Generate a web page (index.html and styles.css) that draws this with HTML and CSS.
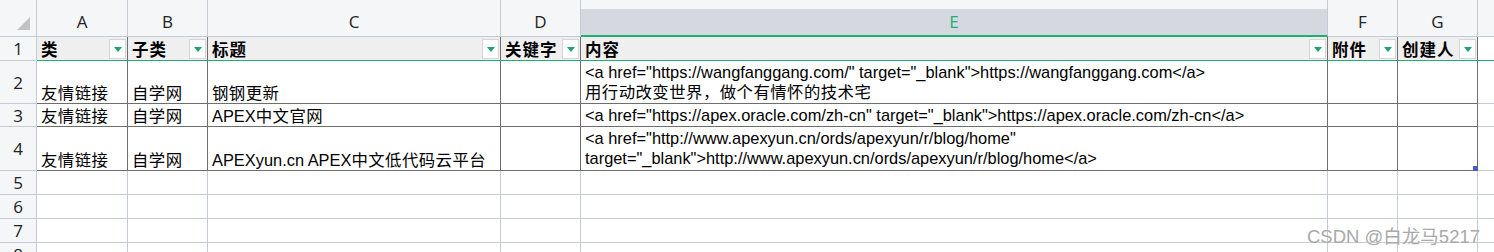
FILE: index.html
```html
<!DOCTYPE html>
<html lang="zh-CN">
<head>
<meta charset="utf-8">
<title>Sheet</title>
<link rel="stylesheet" href="styles.css">
</head>
<body>
<div class="sheet">
  <div class="grid">
    <!-- column header row -->
    <div class="ch corner"><span class="tri"></span></div>
    <div class="ch">A</div>
    <div class="ch">B</div>
    <div class="ch">C</div>
    <div class="ch">D</div>
    <div class="ch sel">E</div>
    <div class="ch">F</div>
    <div class="ch">G</div>
    <div class="ch last"></div>

    <!-- row 1 -->
    <div class="rh">1</div>
    <div class="c hd"><span class="lbl">类</span><span class="fb"></span></div>
    <div class="c hd"><span class="lbl">子类</span><span class="fb"></span></div>
    <div class="c hd"><span class="lbl">标题</span><span class="fb"></span></div>
    <div class="c hd"><span class="lbl">关键字</span><span class="fb"></span></div>
    <div class="c hd"><span class="lbl">内容</span><span class="fb"></span></div>
    <div class="c hd"><span class="lbl">附件</span><span class="fb"></span></div>
    <div class="c hd"><span class="lbl">创建人</span><span class="fb"></span></div>
    <div class="c e hdx"></div>

    <!-- row 2 -->
    <div class="rh">2</div>
    <div class="c d bot"><span class="cj">友情链接</span></div>
    <div class="c d bot"><span class="cj">自学网</span></div>
    <div class="c d bot"><span class="cj">钢钢更新</span></div>
    <div class="c d"></div>
    <div class="c d top">&lt;a href="https://wangfanggang.com/" target="_blank"&gt;https://wangfanggang.com&lt;/a&gt;<br><span class="cj">用行动改变世界，做个有情怀的技术宅</span></div>
    <div class="c d"></div>
    <div class="c d"></div>
    <div class="c e"></div>

    <!-- row 3 -->
    <div class="rh">3</div>
    <div class="c d bot"><span class="cj">友情链接</span></div>
    <div class="c d bot"><span class="cj">自学网</span></div>
    <div class="c d bot"><span>APEX<span class="cj">中文官网</span></span></div>
    <div class="c d"></div>
    <div class="c d top">&lt;a href="https://apex.oracle.com/zh-cn" target="_blank"&gt;https://apex.oracle.com/zh-cn&lt;/a&gt;</div>
    <div class="c d"></div>
    <div class="c d"></div>
    <div class="c e"></div>

    <!-- row 4 -->
    <div class="rh">4</div>
    <div class="c d bot"><span class="cj">友情链接</span></div>
    <div class="c d bot"><span class="cj">自学网</span></div>
    <div class="c d bot"><span>APEXyun.cn APEX<span class="cj">中文低代码云平台</span></span></div>
    <div class="c d"></div>
    <div class="c d top">&lt;a href="http://www.apexyun.cn/ords/apexyun/r/blog/home"<br>target="_blank"&gt;http://www.apexyun.cn/ords/apexyun/r/blog/home&lt;/a&gt;</div>
    <div class="c d"></div>
    <div class="c d handle-cell"><span class="handle"></span></div>
    <div class="c e"></div>

    <!-- rows 5-8 -->
    <div class="rh">5</div>
    <div class="c"></div><div class="c"></div><div class="c"></div><div class="c"></div><div class="c"></div><div class="c"></div><div class="c"></div><div class="c e"></div>
    <div class="rh">6</div>
    <div class="c"></div><div class="c"></div><div class="c"></div><div class="c"></div><div class="c"></div><div class="c"></div><div class="c"></div><div class="c e"></div>
    <div class="rh">7</div>
    <div class="c"></div><div class="c"></div><div class="c"></div><div class="c"></div><div class="c"></div><div class="c"></div><div class="c"></div><div class="c e"></div>
    <div class="rh">8</div>
    <div class="c"></div><div class="c"></div><div class="c"></div><div class="c"></div><div class="c"></div><div class="c"></div><div class="c"></div><div class="c e"></div>
  </div>
  <div class="watermark">CSDN @白龙马5217</div>
</div>
</body>
</html>
```

FILE: styles.css
```css
* { box-sizing: border-box; }
html, body { margin: 0; padding: 0; background: #ffffff; }
body {
  font-family: "Liberation Sans", "Noto Sans CJK SC", sans-serif;
  font-size: 16.4px;
  color: #000;
  overflow: hidden;
  width: 1494px;
  height: 252px;
}
.sheet { position: relative; width: 1494px; height: 252px; overflow: hidden; }
.grid {
  display: grid;
  grid-template-columns: 37px 91px 80px 293px 80px 747px 70px 80px 116px;
  grid-template-rows: 37px 24px 43px 23px 44px 24px 24px 24px 24px;
}
.ch {
  background: #f5f6f8;
  border-right: 1px solid #c5cad6;
  border-bottom: 1px solid #c5cad6;
  display: flex;
  align-items: flex-end;
  justify-content: center;
  padding-bottom: 3px;
  font-family: "Open Sans", "Liberation Sans", sans-serif;
  font-size: 17px;
  color: #222;
}
.ch.sel {
  background: #d5d8df;
  border-bottom: 2px solid #1fae74;
  color: #1fae74;
  box-shadow: inset 0 9px 0 #f5f6f8;
  padding-bottom: 2px;
}
.ch.last { border-right: none; }
.corner { position: relative; }
.tri {
  position: absolute;
  left: 17px;
  top: 17px;
  width: 0; height: 0;
  border-left: 13px solid transparent;
  border-bottom: 13px solid #c3c3c3;
}
.rh {
  background: #f5f6f8;
  border-right: 1px solid #c5cad6;
  border-bottom: 1px solid #c5cad6;
  display: flex;
  align-items: center;
  justify-content: center;
  font-family: "Open Sans", "Liberation Sans", sans-serif;
  font-size: 17px;
  color: #222;
}
.c {
  border-right: 1px solid #c5cad6;
  border-bottom: 1px solid #c5cad6;
  padding: 0 4px;
  white-space: nowrap;
  overflow: visible;
  display: flex;
}
.c.hd {
  background: #efefef;
  border-right: 1px solid #6e6e6e;
  border-bottom: 1px solid #1fae74;
  align-items: center;
  justify-content: space-between;
  padding: 0 1px 0 4px;
  font-weight: bold;
  font-size: 16.5px;
}
.c.hdx { border-bottom: 1px solid #1fae74; }
.lbl { letter-spacing: 1px; }
.cj { letter-spacing: 0.45px; }
.fb {
  width: 17px;
  height: 20px;
  background: #fdfdfd;
  border: 1px solid #d6d6d6;
  display: flex;
  align-items: center;
  justify-content: center;
}
.fb::after {
  content: "";
  width: 0; height: 0;
  border-left: 4px solid transparent;
  border-right: 4px solid transparent;
  border-top: 5px solid #1aa66c;
  margin-top: 1px;
}
.c.d {
  border-right: 1px solid #6e6e6e;
  border-bottom: 1px solid #6e6e6e;
}
.bot { align-items: flex-end; padding-bottom: 0; line-height: 19px; }
.top { align-items: flex-start; line-height: 20px; display: block; padding-top: 1px; }
.c.e { border-right: none; }
.handle-cell { position: relative; }
.handle {
  position: absolute;
  right: -1px;
  bottom: -1px;
  width: 5px;
  height: 5px;
  background: #4a5cc0;
}
.watermark {
  position: absolute;
  left: 1307px;
  top: 222px;
  font-family: "Liberation Sans", "Noto Sans CJK SC", sans-serif;
  font-size: 18.5px;
  color: #a9a9a9;
  text-shadow: 0 0 1px #fff;
  white-space: nowrap;
}
```
